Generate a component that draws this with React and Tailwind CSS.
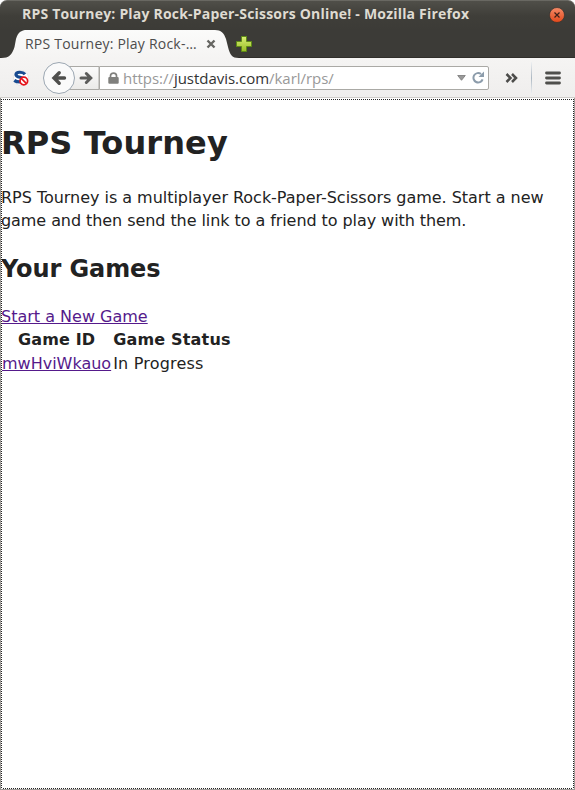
import React from "react";

function TitleBar() {
  return (
    <div className="flex h-[29px] items-center justify-between pl-[22px] pr-[10px]">
      <span className="mb-[2px] whitespace-nowrap font-['Open_Sans','Noto_Sans',sans-serif] text-[14px] leading-[27px] font-bold tracking-[0.2px] text-[#dfdbd2]">
        RPS Tourney: Play Rock-Paper-Scissors Online! - Mozilla Firefox
      </span>
      <svg className="h-4 w-4 shrink-0" viewBox="0 0 16 16">
        <defs>
          <linearGradient id="close" x1="0" y1="0" x2="0" y2="1">
            <stop offset="0" stopColor="#f58b68" />
            <stop offset="1" stopColor="#e2481a" />
          </linearGradient>
        </defs>
        <circle cx="8" cy="8" r="7.5" fill="url(#close)" stroke="#33302c" strokeWidth=".7" />
        <path d="M5.500 5.500l5 5M10.500 5.500l-5 5" stroke="#3c2018" strokeWidth="1.2" />
      </svg>
    </div>
  );
}

function TabStrip() {
  return (
    <div className="relative flex h-[29px] items-center pl-[25px]">
      <svg className="absolute left-0 top-0 h-[29px] w-[240px]" viewBox="0 0 240 29">
        <defs>
          <linearGradient id="tab" x1="0" y1="0" x2="0" y2="1">
            <stop offset="0" stopColor="#fbfbfa" />
            <stop offset="1" stopColor="#f5f4f3" />
          </linearGradient>
        </defs>
        <path
          d="M1 29C9 29 12 26 14.500 18L16 10C18 3.500 21 1 27 1H215C221 1 224 4 226 10L228 18C230 26 232 29 239 29Z"
          fill="url(#tab)"
        />
      </svg>
      <span className="relative w-[179px] shrink-0 whitespace-nowrap font-['Open_Sans','Noto_Sans',sans-serif] text-[14px] leading-[29px] tracking-[0.22px] text-[#4c4c4c]">
        RPS Tourney: Play Rock-…
      </span>
      <svg className="relative ml-[2px] h-[10px] w-[10px] shrink-0" viewBox="0 0 10 10">
        <path d="M1.500 1.500l7 7M8.500 1.500l-7 7" stroke="#666662" strokeWidth="2.4" />
      </svg>
      <svg className="relative ml-[20px] h-4 w-4 shrink-0" viewBox="0 0 16 16">
        <defs>
          <linearGradient id="plus" x1="0" y1="0" x2="0" y2="1">
            <stop offset="0" stopColor="#d9ee76" />
            <stop offset="1" stopColor="#99bd24" />
          </linearGradient>
        </defs>
        <path
          d="M5.500 .5H10.500V5.500H15.500V10.500H10.500V15.500H5.500V10.500H.5V5.500H5.500Z"
          fill="url(#plus)"
          stroke="#5e8b16"
        />
      </svg>
    </div>
  );
}

function Toolbar() {
  return (
    <div className="flex h-10 items-center border-b border-[#cfcdca] bg-linear-to-b from-[#f5f4f3] to-[#efeeed] pl-[13px]">
      <svg className="h-4 w-4 shrink-0" viewBox="0 0 16 16">
        <circle cx="8" cy="8" r="7.500" fill="#fff" stroke="#e0e0e0" strokeWidth=".7" />
        <path
          d="M12 4.200C10 1.700 3 1.300 3 4.700C3 8 11 6.400 11 9.600C11 12.800 4 12.400 1.300 10.400"
          fill="none"
          stroke="#174a90"
          strokeWidth="3.200"
        />
        <circle cx="10.800" cy="11" r="3.800" fill="#fff" stroke="#e6131b" strokeWidth="1.700" />
        <path d="M8.200 8.300l5.300 5.300" stroke="#e6131b" strokeWidth="1.700" />
      </svg>
      <svg className="ml-[13px] h-[34px] w-[57px] shrink-0" viewBox="0 0 57 34">
        <defs>
          <linearGradient id="forward" x1="0" y1="0" x2="0" y2="1">
            <stop offset="0" stopColor="#fbfbfb" />
            <stop offset="1" stopColor="#ebeae8" />
          </linearGradient>
        </defs>
        <path d="M24 5.500H57V28.500H24Z" fill="url(#forward)" stroke="#aaa9a5" />
        <circle cx="17" cy="17" r="15.500" fill="#fafafa" stroke="#9ca7b2" />
        <path
          d="M22.500 17H12.500M17.200 11.800L12 17L17.200 22.200"
          fill="none"
          stroke="#4f4f4d"
          strokeWidth="3.400"
          strokeLinecap="round"
        />
        <path
          d="M39 17H48M44.300 12.500L48.800 17L44.300 21.500"
          fill="none"
          stroke="#5c5c5a"
          strokeWidth="3"
          strokeLinecap="round"
        />
      </svg>
      <div className="flex h-6 w-[390px] shrink-0 items-center rounded-r-[2px] border border-[#aaa9a5] bg-white pl-2">
        <svg className="h-3 w-[11px] shrink-0" viewBox="0 0 11 12">
          <path d="M2.500 6V3.800C2.500 .2 8.500 .2 8.500 3.800V6" fill="none" stroke="#80807d" strokeWidth="1.700" />
          <rect x=".3" y="5" width="10.400" height="6.700" rx="1" fill="#80807d" />
        </svg>
        <span className="ml-[4px] w-[334px] shrink-0 whitespace-nowrap font-['Open_Sans','Noto_Sans',sans-serif] text-[15px] leading-[22px] tracking-[-0.03px] text-[#999]">
          https://<span className="text-[#333]">justdavis.com</span>/karl/rps/
        </span>
        <svg className="mt-px h-[6px] w-[9px] shrink-0" viewBox="0 0 9 6">
          <path d="M.7 .5H8.300L4.500 5.300Z" fill="#999" stroke="#777" strokeWidth=".8" />
        </svg>
        <svg className="ml-[6px] h-[13px] w-[13px] shrink-0" viewBox="0 0 13 13">
          <path d="M10.600 8.300A4.700 4.700 0 1 1 9 3" fill="none" stroke="#8c9cab" strokeWidth="2" />
          <path d="M12 .5V6H6.500Z" fill="#8c9cab" />
        </svg>
      </div>
      <svg className="ml-[16px] h-[10px] w-[13px] shrink-0" viewBox="0 0 13 10">
        <path d="M1.500 1L5.500 5L1.500 9M7 1L11 5L7 9" fill="none" stroke="#4c4c4a" strokeWidth="2.500" />
      </svg>
      <div className="ml-[13px] h-8 w-px shrink-0 bg-linear-to-b from-[#eef0f2] via-[#adb8c2] to-[#eef0f2]" />
      <svg className="ml-[13px] h-[14px] w-4 shrink-0" viewBox="0 0 16 14">
        <path d="M1.500 2H14.500M1.500 7H14.500M1.500 12H14.500" stroke="#4f4f4c" strokeWidth="2.800" strokeLinecap="round" />
      </svg>
    </div>
  );
}

export default function App() {
  return (
    <div className="flex h-[790px] w-[575px] flex-col overflow-hidden bg-white">
      <header className="relative shrink-0">
        <div className="absolute inset-x-0 top-0 h-[58px] rounded-t-[7px] border-t border-[#696862] bg-linear-to-b from-[#504f49] via-[#3f3e39] to-[#3c3b37] bg-size-[100%_30px]" />
        <div className="absolute inset-x-0 top-[29px] h-[29px] border-b border-[#302e2a] bg-[#3c3b37]" />
        <div className="relative">
          <TitleBar />
          <TabStrip />
          <Toolbar />
        </div>
      </header>
      <main className="relative grow border-x border-b border-[#9c9a97] bg-white pt-px font-['DejaVu_Sans',sans-serif] text-[16px] leading-[22px] text-[#222]">
        <div className="pointer-events-none absolute left-0 top-[1px] h-px w-full bg-[repeating-linear-gradient(90deg,#222_0_1px,#fff_1px_2px)]" />
        <div className="pointer-events-none absolute bottom-0 left-0 h-px w-full bg-[repeating-linear-gradient(90deg,#222_0_1px,#fff_1px_2px)]" />
        <div className="pointer-events-none absolute left-0 top-[1px] bottom-0 w-px bg-[repeating-linear-gradient(180deg,#222_0_1px,#fff_1px_2px)]" />
        <div className="pointer-events-none absolute right-0 top-[1px] bottom-0 w-px bg-[repeating-linear-gradient(180deg,#222_0_1px,#fff_1px_2px)]" />
        <h1 className="mt-[22px] mb-[20px] text-[32px] leading-[45px] font-bold tracking-[0.1px]">RPS Tourney</h1>
        <p className="leading-[23px] tracking-[-0.03px]">
          RPS Tourney is a multiplayer Rock-Paper-Scissors game. Start a new
          <br />
          <span className="tracking-[-0.07px]">game and then send the link to a friend to play with them.</span>
        </p>
        <h2 className="my-[20px] text-[24px] leading-[34px] font-bold tracking-[-0.1px]">Your Games</h2>
        <a href="#new" className="block w-fit text-[#551a8b] underline">
          Start a New Game
        </a>
        <table className="border-separate border-spacing-0">
          <thead>
            <tr>
              <th className="p-px text-center font-bold tracking-[0.12px]">Game ID</th>
              <th className="p-px text-center font-bold tracking-[0.18px]">Game Status</th>
            </tr>
          </thead>
          <tbody>
            <tr>
              <td className="p-px">
                <a href="#game" className="text-[#551a8b] underline">
                  mwHviWkauo
                </a>
              </td>
              <td className="p-px tracking-[0.2px]">In Progress</td>
            </tr>
          </tbody>
        </table>
      </main>
    </div>
  );
}
